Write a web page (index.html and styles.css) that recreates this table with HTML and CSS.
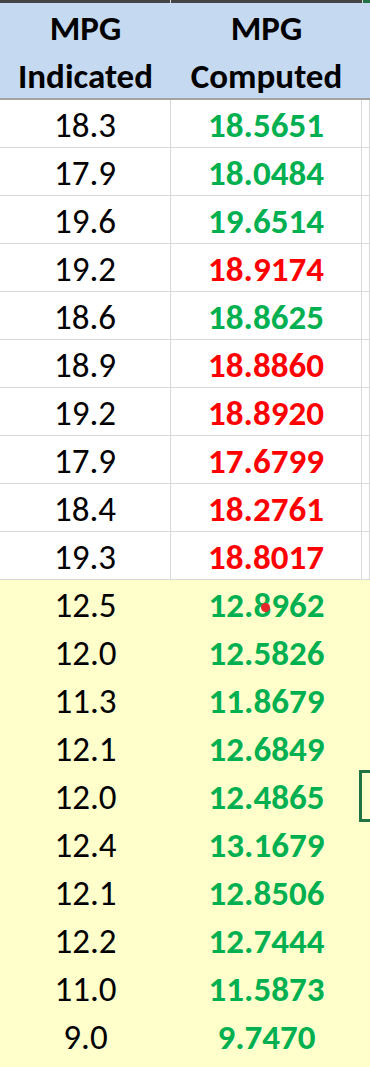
FILE: index.html
```html
<!DOCTYPE html>
<html>
<head>
<meta charset="utf-8">
<link rel="stylesheet" href="styles.css">
</head>
<body>
<div class="sheet">
  <div class="topbar">
    <div class="tb tb-dark"></div>
    <div class="tb tb-dark"></div>
    <div class="tb tb-green"></div>
  </div>
  <div class="header">
    <div class="hcell">MPG<br>Indicated</div>
    <div class="hcell">MPG<br>Computed</div>
    <div class="hcell"></div>
  </div>
  <div class="rows white">
    <div class="row"><div class="c">18.3</div><div class="c v g">18.5651</div><div class="c x"></div></div>
    <div class="row"><div class="c">17.9</div><div class="c v g">18.0484</div><div class="c x"></div></div>
    <div class="row"><div class="c">19.6</div><div class="c v g">19.6514</div><div class="c x"></div></div>
    <div class="row"><div class="c">19.2</div><div class="c v r">18.9174</div><div class="c x"></div></div>
    <div class="row"><div class="c">18.6</div><div class="c v g">18.8625</div><div class="c x"></div></div>
    <div class="row"><div class="c">18.9</div><div class="c v r">18.8860</div><div class="c x"></div></div>
    <div class="row"><div class="c">19.2</div><div class="c v r">18.8920</div><div class="c x"></div></div>
    <div class="row"><div class="c">17.9</div><div class="c v r">17.6799</div><div class="c x"></div></div>
    <div class="row"><div class="c">18.4</div><div class="c v r">18.2761</div><div class="c x"></div></div>
    <div class="row"><div class="c">19.3</div><div class="c v r">18.8017</div><div class="c x"></div></div>
  </div>
  <div class="rows yellow">
    <div class="row"><div class="c">12.5</div><div class="c v g dotted">12.8962<span class="dot"></span></div><div class="c x"></div></div>
    <div class="row"><div class="c">12.0</div><div class="c v g">12.5826</div><div class="c x"></div></div>
    <div class="row"><div class="c">11.3</div><div class="c v g">11.8679</div><div class="c x"></div></div>
    <div class="row"><div class="c">12.1</div><div class="c v g">12.6849</div><div class="c x"></div></div>
    <div class="row"><div class="c">12.0</div><div class="c v g">12.4865</div><div class="c x sel"><span class="selbox"></span></div></div>
    <div class="row"><div class="c">12.4</div><div class="c v g">13.1679</div><div class="c x"></div></div>
    <div class="row"><div class="c">12.1</div><div class="c v g">12.8506</div><div class="c x"></div></div>
    <div class="row"><div class="c">12.2</div><div class="c v g">12.7444</div><div class="c x"></div></div>
    <div class="row"><div class="c">11.0</div><div class="c v g">11.5873</div><div class="c x"></div></div>
    <div class="row"><div class="c">9.0</div><div class="c v g">9.7470</div><div class="c x"></div></div>
  </div>
</div>
</body>
</html>
```

FILE: styles.css
```css
html, body {
  margin: 0;
  padding: 0;
}
body {
  background: #ffffcc;
  font-family: "Carlito", "Calibri", "Open Sans", sans-serif;
  color: #000;
  width: 370px;
  overflow: hidden;
}
.sheet {
  width: 370px;
}
.topbar {
  display: grid;
  grid-template-columns: 170px 191px 1fr;
  column-gap: 1px;
  height: 3px;
  background: #d8d8d8;
}
.tb-dark { background: #454545; }
.tb-green { background: #217346; }
.header {
  display: grid;
  grid-template-columns: 171px 191px 1fr;
  background: #c5d9f1;
  height: 95px;
  border-bottom: 2px solid #a3a3a3;
}
.hcell {
  font-weight: bold;
  font-size: 35px;
  line-height: 48px;
  text-align: center;
  padding-top: 1px;
}
.rows.white { background: #fff; }
.rows.yellow { background: #ffffcc; }
.row {
  display: grid;
  grid-template-columns: 171px 191px 1fr;
  height: 48px;
}
.white .c {
  border-right: 1px solid #d9d9d9;
  border-bottom: 1px solid #d9d9d9;
}
.c {
  font-size: 35px;
  line-height: 51px;
  text-align: center;
  box-sizing: border-box;
  height: 48px;
}
.v { font-weight: bold; }
.g { color: #00b050; }
.r { color: #ff0000; }
.dotted, .sel { position: relative; }
.dot {
  position: absolute;
  left: 90px;
  top: 23px;
  width: 9px;
  height: 9px;
  border-radius: 50%;
  background: #e8262a;
}
.selbox {
  position: absolute;
  left: -3px;
  top: -2px;
  width: 8px;
  height: 46px;
  border: 3px solid #217346;
  border-right: none;
}
```
